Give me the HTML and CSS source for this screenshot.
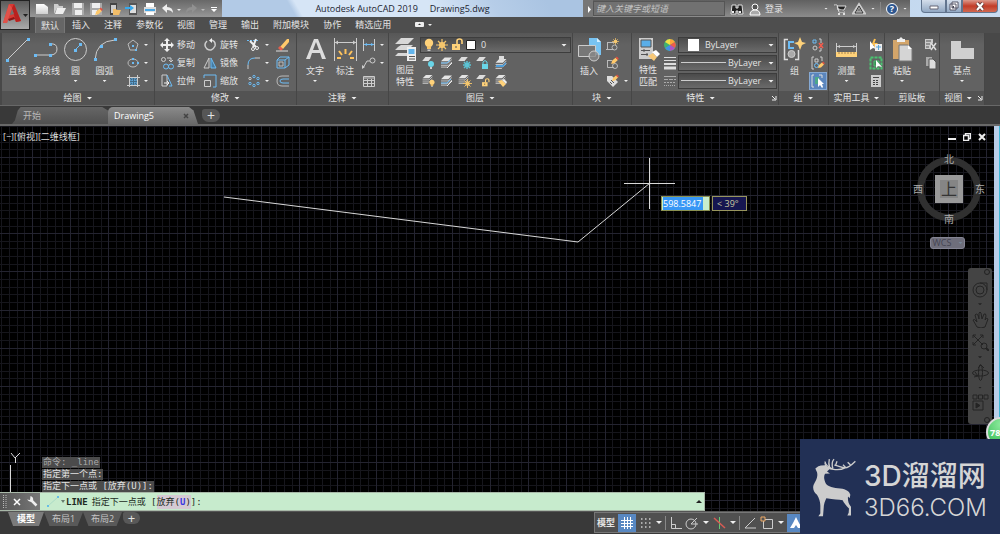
FILE: index.html
```html
<!DOCTYPE html>
<html lang="zh-CN">
<head>
<meta charset="utf-8">
<title>Autodesk AutoCAD 2019 - Drawing5.dwg</title>
<link rel="stylesheet" href="styles.css">
</head>
<body>
<svg class="defs" aria-hidden="true">
  <defs>
    <linearGradient id="paper" x1="0" y1="0" x2="0" y2="1"><stop offset="0" stop-color="#fff"/><stop offset="1" stop-color="#cfcfcf"/></linearGradient>
    <symbol id="sheet" viewBox="0 0 12 5"><path d="M4 0H12L8 5H0Z" fill="#ddd"/></symbol>
    <symbol id="stack" viewBox="0 0 12 11"><path d="M4 0H12L8 4H0Z" fill="#e4e4e4"/><path d="M0 6H8L12 2M0 8.500H8L12 5M0 10.500H7" fill="none" stroke="#d0d0d0"/></symbol>
    <symbol id="bulb" viewBox="0 0 10 14"><circle cx="5" cy="5" r="4.200" fill="#ffd27a"/><path d="M3 8H7V11H3Z" fill="#f5c56b"/><path d="M3.500 11.500H6.500V13H3.500Z" fill="#c9c9c9"/></symbol>
    <symbol id="sun" viewBox="0 0 12 12"><circle cx="6" cy="6" r="3" fill="#ffd27a"/><path d="M6 0V12M0 6H12M2 2L10 10M10 2L2 10" stroke="#f5c56b" stroke-width="1.200"/></symbol>
    <symbol id="unlock" viewBox="0 0 12 13"><path d="M1 6H9V12H1Z" fill="#ffd27a"/><path d="M6 6V3Q6 1 8.500 1T11 3V6" fill="none" stroke="#ffd27a" stroke-width="1.600"/><path d="M4.500 8H5.500V10H4.500Z" fill="#555"/></symbol>
    <symbol id="pencil" viewBox="0 0 8 8"><path d="M1 7L2 4L5 1.500L7 3.500L4 6.500Z" fill="#ffc96b"/><path d="M5 1.500L6 .500L7.800 2.300L7 3.500Z" fill="#e34f3f"/></symbol>
  </defs>
</svg>

<header class="top">
  <button class="app-button" aria-label="应用程序菜单">
    <svg width="30" height="28" viewBox="0 0 30 28"><path d="M3 22L9 3H14L21 20L16 21L14 17L8 18L7 22Z" fill="#d83a34"/><path d="M9 3L3 22L7 22L12 7Z" fill="#e0524a"/><path d="M14 3L21 20L16 21L12 7Z" fill="#b8211f"/><path d="M10 14L12 8L14 13Z" fill="#727272"/><path d="M8 18L14 16L15 18L9 20Z" fill="#8e1515"/><path d="M23 13H28L25.500 16Z" fill="#222"/></svg>
  </button>
  <div class="titlebar">
    <div class="quick">
      <button aria-label="新建"><svg width="14" height="14"><path d="M1 2H9L13 5V12H1Z" fill="url(#paper)"/></svg></button>
      <button aria-label="打开"><svg width="14" height="14"><path d="M1 2H5L6 4H10V6H4L1 12Z" fill="#ccc"/><path d="M4 6H13L10 12H2Z" fill="#eee"/></svg></button>
      <button aria-label="保存"><svg width="14" height="14"><path d="M1 1H13V13H1Z" fill="#aaa"/><path d="M3 1H11V6H3ZM4 8H11V13H4Z" fill="#eee"/></svg></button>
      <button aria-label="另存为"><svg width="14" height="14"><path d="M1 1H13V13H1Z" fill="#aaa"/><path d="M3 1H11V6H3ZM3 8H8V13H3Z" fill="#eee"/><use href="#pencil" x="5" y="5" width="9" height="9"/></svg></button>
      <button aria-label="从移动设备打开"><svg width="14" height="14"><path d="M3 1H10V13H3Z" fill="#444"/><path d="M4 3H9V11H4Z" fill="#ccc"/><path d="M6 7H9L10 8H14L12 13H6Z" fill="#f1bd69"/></svg></button>
      <button aria-label="保存到移动设备"><svg width="14" height="14"><path d="M4 1H12V13H4Z" fill="#555"/><path d="M5 3H11V11H5Z" fill="#ddd"/><path d="M0 5H5V3L9 6L5 9V7H0Z" fill="#36a9ed"/></svg></button>
      <button aria-label="打印"><svg width="14" height="14"><path d="M3 1H11V5H3Z" fill="#fff"/><path d="M1 5H13V11H1Z" fill="#ddd"/><path d="M2 7H12V9H2Z" fill="#48a6e3"/><path d="M3 10H11V13H3Z" fill="#fff"/></svg></button>
      <button aria-label="放弃"><svg width="20" height="14"><path d="M1 6L6 2V5Q12 5 12 11Q10 8 6 8V11Z" fill="#eee"/><path d="M16 7H20L18 9Z" fill="#eee"/></svg></button>
      <button aria-label="重做"><svg width="20" height="14"><path d="M12 6L7 2V5Q1 5 1 11Q3 8 7 8V11Z" fill="#919191"/><path d="M16 7H20L18 9Z" fill="#bbb"/></svg></button>
      <button aria-label="自定义"><svg width="10" height="14"><path d="M2 5H8V6H2ZM2 7H8L5 10Z" fill="#fff"/></svg></button>
    </div>
    <div class="caption"><span>Autodesk AutoCAD 2019</span><span>Drawing5.dwg</span></div>
    <div class="info">
      <button class="info-arrow" aria-label="展开"><svg width="9" height="16"><path d="M4 5L7 8.500L4 12Z" fill="#fff"/></svg></button>
      <input class="search" type="search" aria-label="搜索" placeholder="键入关键字或短语">
      <button aria-label="查找"><svg width="14" height="14"><path d="M2 3H6V6H8V3H12L13 12H8V9H6V12H1Z" fill="#222" stroke="#ddd"/><path d="M3 9V11M10 9V11" stroke="#eee" stroke-width="2"/></svg></button>
      <button class="login"><svg width="12" height="14"><circle cx="6" cy="5" r="3" fill="#555" stroke="#fff"/><path d="M1 13Q1 8 6 8T11 13Z" fill="#aaa" stroke="#fff"/></svg>登录</button>
      <i class="caret small push"></i>
      <button aria-label="应用商店"><svg width="14" height="14"><path d="M1 3H4L6 10H12M4 4H13L11 8H5Z" fill="#222" stroke="#ddd"/><circle cx="6" cy="12" r="1" fill="#fff"/><circle cx="11" cy="12" r="1" fill="#fff"/></svg></button>
      <button aria-label="保持连接"><svg width="14" height="14"><path d="M7 3L2 11H12Z" fill="none" stroke="#ccc" stroke-width="3"/><path d="M7 4L3 11H11Z" fill="none" stroke="#333"/></svg></button>
      <i class="caret small"></i><i class="bar"></i>
      <button aria-label="帮助" class="help">?</button>
      <i class="caret small"></i>
    </div>
    <div class="window-controls">
      <button aria-label="最小化"><svg width="12" height="8"><path d="M2 4H10V7H2Z" fill="#fff" stroke="#667"/></svg></button>
      <button aria-label="还原"><svg width="10" height="10"><path d="M3 1H9V7H3ZM1 3H7V9H1Z" fill="#fff" stroke="#556"/><path d="M3.500 5H5V7H3.500Z" fill="#445"/></svg></button>
      <button class="close" aria-label="关闭"><svg width="10" height="9"><path d="M2 1L8 8M8 1L2 8" stroke="#6e403d" stroke-width="4"/><path d="M2 1L8 8M8 1L2 8" stroke="#fff" stroke-width="2"/></svg></button>
    </div>
  </div>
  <nav class="menu">
    <a class="active" href="#">默认</a><a href="#">插入</a><a href="#">注释</a><a href="#">参数化</a><a href="#">视图</a><a href="#">管理</a><a href="#">输出</a><a href="#">附加模块</a><a href="#">协作</a><a href="#">精选应用</a>
    <button class="menu-toggle" aria-label="最小化功能区"><svg width="18" height="8"><rect x="0" y="1" width="9" height="5" rx="1" fill="#eee"/><path d="M3 4L4.500 2.500L6 4Z" fill="#333"/><path d="M13 3H17L15 5Z" fill="#eee"/></svg></button>
  </nav>
</header>

<main class="ribbon">
  <section class="panel draw">
    <div class="tools">
      <button class="big"><svg width="25" height="25" fill="none"><path d="M2 23L23 2" stroke="#ccc"/><path d="M1 22h3v3H1zM22 1h3v3h-3z" fill="#6cbcf5"/></svg>直线</button>
      <button class="big"><svg width="25" height="25" fill="none"><path d="M1 18H16Q23 18 23 12T16 7" stroke="#ccc"/><path d="M0 17h3v3H0zM15 17h3v3h-3zM15 6h3v3h-3z" fill="#6cbcf5"/></svg>多段线</button>
      <button class="big"><svg width="25" height="25" fill="none"><circle cx="12.500" cy="12.500" r="11" stroke="#ccc"/><path d="M12 13L18 7" stroke="#6cbcf5"/><path d="M11 12h3v3h-3zM16 6h3v3h-3z" fill="#6cbcf5"/></svg>圆<i class="caret small"></i></button>
      <button class="big"><svg width="25" height="25" fill="none"><path d="M3 23Q4 4 23 3" stroke="#ccc"/><path d="M2 21h3v3H2zM8 8h3v3H8zM22 1h3v3h-3z" fill="#6cbcf5"/></svg>圆弧<i class="caret small"></i></button>
      <div class="stack">
        <button aria-label="多边形"><svg width="14" height="14" fill="none"><path d="M7 2L12 6L10 12H4L2 6Z" stroke="#bbb"/><path d="M6 7h2v2H6zM9 11h2v2H9z" fill="#6cbcf5"/></svg><i class="caret small"></i></button>
        <button aria-label="椭圆"><svg width="14" height="14" fill="none"><ellipse cx="7" cy="7" rx="5" ry="4" stroke="#bbb"/><path d="M6 6h2v2H6zM11 6h2v2h-2zM6 2h2v2H6z" fill="#6cbcf5"/></svg><i class="caret small"></i></button>
        <button aria-label="图案填充"><svg width="14" height="14" fill="none"><path d="M4 4H11V11H4Z" fill="#426985"/><path d="M4 6H11M4 9H11M6 4V11M9 4V11" stroke="#6cbcf5" stroke-dasharray="1 1"/><path d="M3.500 1V13M11.500 1V13M1 3.500H14M1 11.500H14" stroke="#ccc"/></svg><i class="caret small"></i></button>
      </div>
    </div>
    <button class="panel-title">绘图<i class="caret"></i></button>
  </section>

  <section class="panel modify">
    <div class="tools">
      <div class="stack">
        <button><svg width="14" height="14"><path d="M6 3H4L7 0L10 3H8V6H11V4L14 7L11 10V8H8V11H10L7 14L4 11H6V8H3V10L0 7L3 4V6H6Z" fill="#eee"/></svg>移动</button>
        <button><svg width="14" height="14" fill="none"><circle cx="3.500" cy="3.500" r="2" stroke="#ccc"/><path d="M7 2H11V5M9 4L11 6L13 4" stroke="#ccc"/><circle cx="6" cy="10.500" r="2.500" stroke="#6cbcf5"/><circle cx="11" cy="10.500" r="2.500" stroke="#6cbcf5"/></svg>复制</button>
        <button><svg width="14" height="14" fill="none"><path d="M2 1H7V12H2Z" stroke="#ccc"/><path d="M7 1L12 12H9" stroke="#6cbcf5"/><path d="M4 9H9M7 7L9 9L7 11" stroke="#eee"/></svg>拉伸</button>
      </div>
      <div class="stack">
        <button><svg width="14" height="14" fill="none"><path d="M4 3Q0 7 4 11Q9 14 12 8Q13 3 8 2" stroke="#ccc" stroke-width="1.500"/><path d="M9 0L6 2.500L9 5Z" fill="#eee"/></svg>旋转</button>
        <button><svg width="14" height="14" fill="none"><path d="M6 2V12H1Z" stroke="#ccc"/><path d="M8 2V12H13Z" fill="#477ba0" stroke="#6cbcf5"/></svg>镜像</button>
        <button><svg width="14" height="14" fill="none"><path d="M1 4V1H13V13H10" stroke="#6cbcf5"/><path d="M1.500 6.500H7.500V12.500H1.500Z" stroke="#ccc"/></svg>缩放</button>
      </div>
      <div class="stack">
        <button aria-label="修剪"><svg width="14" height="14" fill="none"><path d="M0 2.500H11" stroke="#6cbcf5" stroke-dasharray="2 1"/><path d="M9 1L6 9M3 3L9 9" stroke="#eee" stroke-width="2"/><circle cx="10" cy="10" r="1.500" stroke="#eee"/><circle cx="6" cy="11" r="1.500" stroke="#eee"/></svg><i class="caret small"></i></button>
        <button aria-label="圆角"><svg width="14" height="14" fill="none"><path d="M1 13V9" stroke="#ccc"/><path d="M1 9Q1 2 8 2" stroke="#6cbcf5"/><path d="M8 2H13" stroke="#ccc"/></svg><i class="caret small"></i></button>
        <button aria-label="阵列"><svg width="14" height="14" fill="none" stroke="#6cbcf5"><circle cx="7" cy="2.500" r="1.200"/><circle cx="11" cy="4.500" r="1.200"/><circle cx="11" cy="9.500" r="1.200"/><circle cx="7" cy="11.500" r="1.200"/><circle cx="3" cy="9.500" r="1.200"/><circle cx="3" cy="4.500" r="1.200" stroke="#ccc"/></svg><i class="caret small"></i></button>
      </div>
      <div class="stack">
        <button aria-label="删除"><svg width="14" height="14"><path d="M4 9L11 1L13 1V4L7 11Z" fill="#ffc96b"/><path d="M2 10L4 8L7 11L5 13Z" fill="#e35f4d"/><path d="M0 13H12" stroke="#ddd"/></svg></button>
        <button aria-label="分解"><svg width="14" height="14" fill="none"><path d="M1 4H9V12H1ZM4 1H13V9L9 12M1 4L4 1M9 4L13 1" stroke="#6cbcf5"/><path d="M3 6H7V10H3Z" stroke="#bbb"/></svg></button>
        <button aria-label="偏移"><svg width="14" height="14" fill="none"><path d="M13 2H6Q1 2 1 7T6 12H13" stroke="#bbb"/><path d="M13 5H7Q4 5 4 7T7 9H13" stroke="#6cbcf5"/></svg></button>
      </div>
    </div>
    <button class="panel-title">修改<i class="caret"></i></button>
  </section>

  <section class="panel annotate">
    <div class="tools">
      <button class="big"><svg width="25" height="25"><path d="M3 22L11 2H15L23 22H19L17 16H9L7 22ZM10 13H16L13 5Z" fill="#ddd"/></svg>文字<i class="caret small"></i></button>
      <button class="big"><svg width="25" height="25" fill="none"><path d="M1.500 1V24M23.500 1V24M2 5.500H23" stroke="#ccc"/><path d="M2 5.500L5 3.500V7.500ZM23 5.500L20 3.500V7.500Z" fill="#ccc"/><path d="M12.500 17V12M9 18L6 14M16 18L19 14M8 21H4M17 21H21" stroke="#ffc35c" stroke-width="2"/></svg>标注</button>
      <div class="stack">
        <button aria-label="线性"><svg width="14" height="14" fill="none"><path d="M1.500 1V13M12.500 1V13" stroke="#ccc"/><path d="M2 6.500H12" stroke="#6cbcf5"/><path d="M2 6.500L5 5V8ZM12 6.500L9 5V8Z" fill="#6cbcf5"/></svg><i class="caret small"></i></button>
        <button aria-label="引线"><svg width="14" height="14" fill="none"><path d="M1 12L5 5H8" stroke="#ccc"/><circle cx="10.500" cy="4.500" r="2.500" stroke="#ccc"/><path d="M0 13V9L3 11Z" fill="#ccc"/></svg><i class="caret small"></i></button>
        <button aria-label="表格"><svg width="14" height="14" fill="none"><path d="M1.500 2.500H12.500V12.500H1.500ZM2 6.500H12M2 9.500H12M5.500 5V12M9.500 5V12M2 4H12" stroke="#ccc"/></svg></button>
      </div>
    </div>
    <button class="panel-title">注释<i class="caret"></i></button>
  </section>

  <section class="panel layers">
    <div class="tools">
      <button class="big wrap"><svg width="25" height="25"><path d="M8 1H21L15 7H2ZM8 8H20L15 13H2L5 10ZM5 16H14V19H2Z" fill="#d8d8d8"/><path d="M14 10H23V24H14Z" fill="#eee"/><path d="M15.500 12H21.500V17H15.500Z" fill="#62b5ed"/><path d="M16 19.500H22M16 22H22" stroke="#555"/></svg>图层特性</button>
      <div class="layer-side">
        <div class="combo">
          <svg width="56" height="14"><use href="#bulb" x="3" width="10" height="14"/><use href="#sun" x="15" y="1" width="12" height="12"/><use href="#unlock" x="30" width="12" height="13"/><path d="M45.500 2.500H54.500V11.500H45.500Z" fill="#fff" stroke="#222"/></svg>
          <select aria-label="图层"><option>0</option></select><i class="caret"></i>
        </div>
        <div class="icon-row">
          <button aria-label="关闭图层"><svg width="14" height="14"><use href="#sheet" x="0" y="1" width="10" height="4"/><circle cx="9" cy="8" r="3" fill="#69d5e8"/><path d="M8 11H10V13H8Z" fill="#ccc"/></svg></button>
          <button aria-label="隔离"><svg width="14" height="14"><use href="#stack" x="1" y="1" width="11" height="11"/><path d="M7 12L12 7" stroke="#eee"/><path d="M1 7H7L10 4" stroke="#6cbcf5" fill="none"/></svg></button>
          <button aria-label="冻结"><svg width="14" height="14"><use href="#sheet" x="0" y="1" width="10" height="4"/><path d="M9 5V13M5 9H13M6 6L12 12M12 6L6 12" stroke="#5cc3d4" stroke-width="1.500"/></svg></button>
          <button aria-label="锁定"><svg width="14" height="14"><use href="#sheet" x="0" y="1" width="10" height="4"/><path d="M6 8H12V13H6Z" fill="#69d5e8"/><path d="M7 8V6Q9 3 11 6V8" fill="none" stroke="#69d5e8"/></svg></button>
          <button aria-label="置为当前"><svg width="14" height="14"><use href="#stack" x="1" y="3" width="12" height="10"/><path d="M2 9H9L12 6V8L9 11H2Z" fill="#4d9edb"/><path d="M5 0H10V5H5Z" fill="#ddd"/></svg></button>
        </div>
        <div class="icon-row">
          <button aria-label="打开所有图层"><svg width="14" height="14"><use href="#stack" x="0" y="1" width="11" height="9"/><use href="#bulb" x="7" y="5" width="6" height="9"/></svg></button>
          <button aria-label="取消隔离"><svg width="14" height="14"><use href="#stack" x="1" y="1" width="11" height="11"/><path d="M7 12L12 7" stroke="#eee"/><path d="M1 9H7L11 5" stroke="#6cbcf5" fill="none"/></svg></button>
          <button aria-label="解冻"><svg width="14" height="14"><use href="#stack" x="0" y="1" width="11" height="9"/><use href="#sun" x="5" y="5" width="9" height="9"/></svg></button>
          <button aria-label="解锁"><svg width="14" height="14"><use href="#sheet" x="0" y="1" width="10" height="4"/><use href="#unlock" x="5" y="4" width="9" height="9"/></svg></button>
          <button aria-label="匹配图层"><svg width="14" height="14"><use href="#stack" x="1" y="1" width="11" height="9"/><path d="M4 7L8 6L12 10L9 13Z" fill="#ffd27a"/><path d="M8 6L10 5L13 8L12 10Z" fill="#eee"/></svg></button>
        </div>
      </div>
    </div>
    <button class="panel-title">图层<i class="caret"></i></button>
  </section>

  <section class="panel block">
    <div class="tools">
      <button class="big"><svg width="25" height="25"><path d="M12 1H20L24 5V18H12Z" fill="#78c3f2"/><path d="M20 1V5H24Z" fill="#d5efff"/><path d="M1.500 8.500H18.500V19.500H1.500Z" fill="#777" stroke="#ccc"/><circle cx="17" cy="19" r="5" fill="#888" fill-opacity=".8" stroke="#ccc"/></svg>插入</button>
      <div class="stack">
        <button aria-label="创建块"><svg width="14" height="14"><path d="M1.500 4.500H8M1.500 4V11.500H8M0 11.500H3" fill="none" stroke="#bbb"/><circle cx="8.500" cy="9.500" r="2.500" fill="none" stroke="#bbb"/><use href="#sun" x="6" y="0" width="7" height="7"/></svg></button>
        <button aria-label="编辑块"><svg width="14" height="14"><path d="M1.500 4.500H6M1.500 4V11.500H8" fill="none" stroke="#bbb"/><circle cx="9" cy="10" r="2.500" fill="none" stroke="#bbb"/><use href="#pencil" x="4" y="0" width="9" height="9"/></svg></button>
        <button aria-label="编辑属性"><svg width="14" height="14"><path d="M1 2H6L12 8L7 13L1 7Z" fill="#ddd"/><path d="M5 6L8 9M4 8L6 10" stroke="#555"/><use href="#pencil" x="5" y="0" width="8" height="8"/></svg><i class="caret small"></i></button>
      </div>
    </div>
    <button class="panel-title">块<i class="caret"></i></button>
  </section>

  <section class="panel props">
    <div class="tools">
      <button class="big wrap"><svg width="25" height="25"><path d="M3 1H17V22H3Z" fill="#ccc"/><path d="M5 3H15V10H5Z" fill="#5aaee8" stroke="#555"/><path d="M5 13.500H14M5 17.500H12M8 12V15M11 16V19" stroke="#555"/><path d="M12 19L17 16L21 20L18 24Z" fill="#f7c877"/><path d="M16 15L20 13L24 17L21 20Z" fill="#fff"/></svg>特性匹配</button>
      <div class="stack marks">
        <span><svg width="14" height="14"><circle cx="7" cy="7" r="6" fill="#40b26f"/><path d="M7 7V1A6 6 0 0 1 12 4Z" fill="#ffa43b"/><path d="M7 7L12 4A6 6 0 0 1 12 10Z" fill="#f15b4c"/><path d="M7 7L12 10A6 6 0 0 1 7 13Z" fill="#ad54c8"/><path d="M7 7V13A6 6 0 0 1 2 10Z" fill="#458fe6"/><path d="M7 7L2 4A6 6 0 0 1 7 1Z" fill="#f2df45"/></svg></span>
        <span><svg width="14" height="14"><path d="M1 1.500H13M1 4.500H13" stroke="#ddd"/><path d="M1 8H13" stroke="#ddd" stroke-width="2"/><path d="M1 12H13" stroke="#ddd" stroke-width="3"/></svg></span>
        <span><svg width="14" height="14"><path d="M1 2.500H13" stroke="#aaa"/><path d="M1 5.500H13" stroke="#aaa" stroke-dasharray="4 1"/><path d="M1 8.500H13" stroke="#aaa" stroke-dasharray="2 1"/><path d="M1 11.500H13" stroke="#aaa" stroke-dasharray="1 1"/></svg></span>
      </div>
      <div class="prop-combos">
        <div class="combo"><svg width="24" height="14"><path d="M9 1H20V13H9Z" fill="#fff"/></svg><select aria-label="颜色"><option>ByLayer</option></select><i class="caret"></i></div>
        <div class="combo"><svg width="47" height="14"><path d="M2 6.500H47" stroke="#ccc"/></svg><select aria-label="线宽"><option>ByLayer</option></select><i class="caret"></i></div>
        <div class="combo"><svg width="47" height="14"><path d="M2 6.500H47" stroke="#ccc"/></svg><select aria-label="线型"><option>ByLayer</option></select><i class="caret"></i></div>
      </div>
    </div>
    <div class="title-row"><button class="panel-title">特性<i class="caret"></i></button><button class="launcher" aria-label="特性面板"><svg width="6" height="6"><path d="M1 1L4 4M5 1V5H1" fill="none" stroke="#eee"/></svg></button></div>
  </section>

  <section class="panel group">
    <div class="tools">
      <button class="big"><svg width="25" height="25" fill="none"><path d="M6 2.500H2.500V22.500H6M13 22.500H16.500V13" stroke="#ddd" stroke-width="1.500"/><path d="M12 5H7V11H12" stroke="#6cbcf5" stroke-width="2"/><circle cx="9.500" cy="17" r="3.500" fill="#aaa" stroke="#ccc"/><path d="M18 0L20 5L24 6L20 8L18 13L16 8L12 6L16 5Z" fill="#ffd27a"/></svg>组</button>
      <div class="stack">
        <button aria-label="解除编组"><svg width="14" height="14" fill="none"><path d="M2 2H5V5H2Z" stroke="#6cbcf5"/><circle cx="4" cy="10" r="2" stroke="#ccc"/><path d="M8 1H10V5M10 10V13H8" stroke="#ccc"/><path d="M8 5L12 10M12 5L8 10" stroke="#f45c4d" stroke-width="1.500"/></svg></button>
        <button aria-label="组编辑"><svg width="14" height="14" fill="none"><path d="M3 1H1V13H3M9 1H11V5M4 3H7V6H4Z" stroke="#ccc"/><circle cx="5.500" cy="9.500" r="2" stroke="#6cbcf5"/><use href="#pencil" x="6" y="5" width="8" height="8"/></svg></button>
        <button class="selected" aria-label="启用组选择"><svg width="14" height="14" fill="none"><path d="M3 1H1V13H3M8 1H11V4" stroke="#ddd"/><path d="M4 3H8V10H4Z" fill="#4ca88a"/><path d="M7 4V13L9 11L11 14L12 13L11 10H13Z" fill="#fff"/></svg></button>
      </div>
    </div>
    <button class="panel-title">组<i class="caret"></i></button>
  </section>

  <section class="panel utils">
    <div class="tools">
      <button class="big"><svg width="25" height="25" fill="none"><path d="M2.500 6V15M22.500 6V15M3 9.500H22" stroke="#ccc"/><path d="M3 9.500L6 8V11ZM22 9.500L19 8V11Z" fill="#ccc"/><path d="M2 15H23V20H2Z" fill="#ffd27a"/><path d="M5 15V17M8 15V17M11 15V17M14 15V17M17 15V17M20 15V17" stroke="#a88550"/></svg>测量<i class="caret small"></i></button>
      <div class="stack">
        <button aria-label="快速选择"><svg width="14" height="14"><path d="M6 1L4 6H7L5 9" stroke="#ffc14f" stroke-width="2" fill="none"/><path d="M1 3V12L4 10L7 11Z" fill="#fff"/><path d="M6 6H13V13H6Z" fill="#eee"/><path d="M7 9H12M9.500 7V12" stroke="#58a5da"/></svg></button>
        <button aria-label="全部选择"><svg width="14" height="14" fill="none"><path d="M1.500 1.500H12.500V12.500H1.500Z" stroke="#4ac370" stroke-width="2" stroke-dasharray="3 1"/><path d="M5 5H10V10H5Z" stroke="#4ac370" fill="#3b8b55"/><path d="M7 4V12L9 10L13 11Z" fill="#fff"/></svg></button>
        <button aria-label="快速计算器"><svg width="14" height="14"><path d="M2 1H12V13H2Z" fill="#ccc"/><path d="M4 3.500H10" stroke="#444"/><path d="M4 6.500H10M4 8.500H10M4 10.500H10" stroke="#444" stroke-dasharray="2 1"/></svg></button>
      </div>
    </div>
    <button class="panel-title">实用工具<i class="caret"></i></button>
  </section>

  <section class="panel clip">
    <div class="tools">
      <button class="big"><svg width="25" height="25"><path d="M3 3H19V22H3Z" fill="#d3a56a"/><path d="M7 2H9L11 0L13 2H15V5H7Z" fill="#eee"/><path d="M9 8H18L22 12V24H9Z" fill="#d5d5d5" stroke="#777"/><path d="M18 8V12H22Z" fill="#fff"/></svg>粘贴<i class="caret small"></i></button>
      <div class="stack">
        <button aria-label="剪切"><svg width="14" height="14"><path d="M1 1H9V5L7 7V11H1Z" fill="#ccc"/><path d="M2 3H7M2 6H6M2 9H5" stroke="#555"/><path d="M7 5L12 12M12 5L7 12" stroke="#ddd" stroke-width="1.500"/></svg></button>
        <button aria-label="复制剪裁"><svg width="14" height="14"><path d="M2 1H8V10H2Z" fill="#aaa"/><path d="M5 3H9L12 6V13H5Z" fill="#ddd" stroke="#555"/></svg></button>
      </div>
    </div>
    <div class="panel-title">剪贴板</div>
  </section>

  <section class="panel view">
    <div class="tools">
      <button class="big"><svg width="25" height="25"><path d="M1 4H11V11H24V22H1Z" fill="#d0d0d0"/></svg>基点<i class="caret small"></i></button>
    </div>
    <div class="title-row"><button class="panel-title">视图<i class="caret"></i></button><button class="launcher" aria-label="视图面板"><svg width="6" height="6"><path d="M1 1L4 4M5 1V5H1" fill="none" stroke="#eee"/></svg></button></div>
  </section>
</main>

<nav class="doc-tabs">
  <a class="doc start" href="#">开始</a>
  <a class="doc current" href="#">Drawing5<svg width="6" height="6"><path d="M1 1L5 5M5 1L1 5" stroke="#444" stroke-width="1.500"/></svg></a>
  <button class="doc-add" aria-label="新图形">+</button>
</nav>

<section class="canvas">
  <svg class="drawing" width="100%" height="100%">
    <path id="minor" class="grid-minor"/>
    <path id="major" class="grid-major"/>
    <path class="entity" d="M224 71L578 116L650 57"/>
    <path class="cursor" d="M624 57.500H675M649.500 32V83"/>
    <path class="cursor" d="M10.500 339V386M11 327L15 332L20 327M15.500 332V337"/>
  </svg>
  <div class="viewport-label">[−][俯视][二维线框]</div>
  <div class="dynamic"><label><input value="598.5847" aria-label="长度"></label><output>&lt; 39°</output></div>

  <div class="viewport-controls">
    <button aria-label="最小化视口"><svg width="8" height="8"><path d="M0 5H8V7H0Z" fill="#eee"/></svg></button>
    <button aria-label="还原视口"><svg width="8" height="8" fill="none"><path d="M2.500 2V.500H7.500V5.500H6M.500 2.500H5.500V7.500H.500Z" stroke="#eee" stroke-width="1.500"/></svg></button>
    <button aria-label="关闭视口"><svg width="8" height="8"><path d="M1 1L7 7M7 1L1 7" stroke="#eee" stroke-width="2"/></svg></button>
  </div>
  <div class="cube">
    <span class="n">北</span><span class="w">西</span><button class="ring-top">上</button><span class="e">东</span><span class="s">南</span>
  </div>
  <button class="wcs">WCS<i class="caret small"></i></button>
  <div class="navbar">
    <button class="corner" aria-label="关闭导航栏"><svg width="6" height="6" fill="none"><circle cx="3" cy="3" r="2.500" stroke="#222"/></svg></button>
    <button aria-label="全导航控制盘"><svg width="17" height="17" fill="none" stroke="#242424"><circle cx="8" cy="9" r="7"/><circle cx="8" cy="9" r="4"/><path d="M8 2H15V9"/></svg></button>
    <i class="caret small"></i>
    <button aria-label="平移"><svg width="17" height="17" fill="none" stroke="#242424"><path d="M5 16L1 9Q2 7 5 11L3 4Q4 2 6 4L7 8L7 2Q8 0 9 2L10 8L12 3Q14 2 14 5L13 9Q15 6 16 8L13 16Q9 18 5 16Z"/></svg></button>
    <button aria-label="范围缩放"><svg width="17" height="17" fill="none" stroke="#242424"><path d="M1 1L11 11M11 1L1 11M1 4V1H4M8 1H11V4M1 8V11H4"/><circle cx="12" cy="12" r="3"/><path d="M14 14L17 17" stroke-width="2"/></svg></button>
    <i class="caret small"></i>
    <button aria-label="动态观察"><svg width="17" height="17" fill="none" stroke="#242424"><ellipse cx="8.500" cy="9" rx="8" ry="3"/><ellipse cx="8.500" cy="8.500" rx="2" ry="8"/><path d="M3 8L6 12L2 13M6 4L9 1L12 4"/></svg></button>
    <i class="caret small"></i>
    <button aria-label="ShowMotion"><svg width="17" height="17" fill="none" stroke="#242424"><path d="M1 1H5V5H1ZM6.500 1H10.500V5H6.500ZM12 1H16V5H12ZM1 7H11V16H1Z"/><path d="M4 9L8 11.500L4 14Z" fill="#242424"/></svg></button>
    <button class="corner" aria-label="导航栏选项"><svg width="6" height="6" fill="none"><circle cx="3" cy="3" r="2.500" stroke="#222"/></svg></button>
  </div>

  <div class="history"><p class="old">命令: _line</p><p>指定第一个点:</p><p>指定下一点或 [放弃(U)]:</p></div>
  <div class="command">
    <div class="command-tools">
      <svg width="5" height="13"><path d="M1.500 0V13M4 0V13" stroke="#bbb" stroke-dasharray="1 1"/></svg>
      <button aria-label="关闭命令行"><svg width="8" height="8"><path d="M1 1L7 7M7 1L1 7" stroke="#fff" stroke-width="1.500"/></svg></button>
      <button aria-label="自定义命令行"><svg width="11" height="11"><path d="M4 4L9.500 9.500" stroke="#eee" stroke-width="2.500"/><path d="M3.500 0Q7 1 6 5Q3 7 0 3.500L3 4Z" fill="#eee"/></svg></button>
    </div>
    <svg width="22" height="14"><path d="M4 11L14 2" stroke="#abdcc6"/><path d="M3 10h2v2H3zM13 1h2v2h-2z" fill="#65bde7"/><path d="M17 5H21L19 8Z" fill="#687c6d"/></svg>
    <b>LINE</b><span class="prompt">指定下一点或 [<button>放弃(<em>U</em>)</button>]:</span>
    <button class="command-up" aria-label="展开历史"><svg width="6" height="6"><path d="M0 4H6L3 1Z" fill="#222"/></svg></button>
  </div>
  <div class="window-edge"></div>
  <div class="ball">78</div>
</section>

<footer class="status">
  <nav class="layouts"><a class="on" href="#">模型</a><a href="#">布局1</a><a href="#">布局2</a><button aria-label="新建布局">+</button></nav>
  <div class="toggles">
    <button class="model">模型</button>
    <button class="lit" aria-label="栅格"><svg width="14" height="14"><path d="M4.500 1V13M7.500 1V13M10.500 1V13M1 4.500H13M1 7.500H13M1 10.500H13" stroke="#fff"/></svg></button>
    <button aria-label="捕捉"><svg width="13" height="14"><path d="M2 3H12M2 7H12M2 11H12" stroke="#ccc" stroke-width="1.500" stroke-dasharray="1.500 2.500"/></svg><i class="caret"></i></button>
    <i class="bar"></i>
    <button aria-label="正交"><svg width="13" height="14" fill="none"><path d="M2.500 1V12.500H13M3 8.500H6.500V12" stroke="#ccc"/></svg></button>
    <button aria-label="极轴"><svg width="14" height="14" fill="none"><circle cx="6" cy="8" r="5" stroke="#ccc"/><path d="M6 8H13M6 8L12 2" stroke="#ccc"/></svg><i class="caret"></i></button>
    <button aria-label="等轴测"><svg width="14" height="14" fill="none"><path d="M7.500 1V13" stroke="#65ca75"/><path d="M2 2L13 12" stroke="#d85b54" stroke-width="1.500"/></svg><i class="caret"></i></button>
    <i class="bar"></i>
    <button aria-label="对象捕捉追踪"><svg width="14" height="14" fill="none"><path d="M12 2L2 12H13" stroke="#ccc"/></svg></button>
    <button aria-label="对象捕捉"><svg width="14" height="14" fill="none"><path d="M3.500 3.500H12.500V12.500H3.500Z" stroke="#ccc"/><path d="M1 1H5V5H1Z" fill="#555" stroke="#eda865"/></svg><i class="caret"></i></button>
    <button class="lit" aria-label="注释可见性"><svg width="14" height="14"><path d="M7 1L10 7L13 12H9L7 9L5 12H1L4 7Z" fill="#fff"/></svg></button>
  </div>
</footer>

<aside class="brand">
  <svg width="45" height="59" viewBox="65 142 135 176"><path d="M75 173L84 166L92 164L104 163L101 154L112 168L122 171L110 182L119 188L104 189C99 198 102 208 106 217C112 228 130 231 150 233C168 235 178 242 180 252L178 262L173 257C172 268 174 278 182 288L182 314H171L175 306L176 293C168 285 160 275 157 268C145 266 130 266 108 262C104 270 100 280 100 292L98 316H84L90 308V285C90 272 86 262 80 252C70 245 66 232 70 222C76 208 84 200 80 184Z" fill="#ccc"/><path d="M110 170C120 176 148 180 164 171C177 171 186 160 195 151M126 174C112 168 105 160 104 152M118 170C114 160 115 153 117 145M128 173C123 160 125 152 131 145M136 163L140 151M164 171C153 170 145 165 132 163M166 170L158 162M180 162L172 154" fill="none" stroke="#ccc" stroke-width="4"/></svg>
  <div><strong>3D溜溜网</strong><span>3D66.COM</span></div>
</aside>
<script src="grid.js"></script>
</body>
</html>
```

FILE: styles.css
```css
*, *::before { box-sizing: border-box; }
body {
  margin: 0;
  height: 100vh;
  display: flex;
  flex-direction: column;
  overflow: hidden;
  position: relative;
  background: #393939;
  color: #e4e4e4;
  font: 9px/12px "Open Sans", "Noto Sans CJK SC", sans-serif;
}
.defs { position: absolute; width: 0; height: 0; }
svg { display: block; flex: none; }
a { color: inherit; text-decoration: none; }
p { margin: 0; }
button, input, select {
  font: inherit;
  color: inherit;
  background: none;
  border: 0;
  padding: 0;
  margin: 0;
}
button { display: flex; align-items: center; justify-content: center; white-space: nowrap; }
.caret {
  flex: none;
  width: 6px;
  height: 3px;
  background: #eee;
  clip-path: polygon(0 0, 100% 0, 50% 100%);
}
.caret.small { width: 4px; height: 2px; }
.bar { width: 1px; height: 14px; background: #888; }

/* title bar and menu */
.top { display: grid; grid-template-columns: 30px 1fr; grid-template-rows: 17px 16px; background: #4e4e4e; flex: none; }
.app-button {
  grid-row: 1 / 3;
  height: 30px;
  background: linear-gradient(#5a5a5a, #aaa);
  border: 1px solid #222;
}
.titlebar { display: flex; min-width: 0; background: linear-gradient(110deg, #b6cfea 0 30%, #d2e2f4 40% 50%, #b6cfea 60%, #c9dcf1); }
.quick { width: 192px; display: flex; align-items: center; gap: 4px; padding-left: 5px; background: linear-gradient(#686868, #969696); }
.caption { flex: 1; display: flex; gap: 12px; justify-content: center; align-items: center; color: #1c2430; white-space: pre; background: linear-gradient(60deg, #b2cae6 20%, #d6e5f6 22% 58%, #b6cde8 75%, #aac4e2 90%); }
.info { display: flex; width: 327px; align-items: center; background: linear-gradient(#606060, #8c8c8c); gap: 5px; padding-right: 3px; }
.info-arrow { background: #777; width: 10px; height: 17px; margin-right: -5px; }
.search { width: 132px; height: 15px; background: #717171; border: 1px solid #555; padding: 0 2px; font-style: italic; }
.search::placeholder { color: #c4c4c4; }
.login { gap: 4px; }
.push { margin-left: auto; }
.help { width: 12px; height: 12px; border-radius: 50%; border: 1px solid #fff; background: #2d568f; color: #fff; font-weight: bold; }
.window-controls { width: 90px; display: flex; justify-content: flex-end; padding: 0 2px 4px 0; }
.window-controls button { width: 25px; border: 1px solid #62758f; border-top: 0; background: linear-gradient(#d4deeb, #91a8c3); border-radius: 0 0 0 4px; }
.window-controls button + button { width: 16px; border-radius: 0; }
.window-controls .close { width: 36px; background: linear-gradient(#dc9a8d, #c23c28 50%, #d16952); border-radius: 0 0 4px 0; }
.menu { display: flex; padding-left: 5px; align-items: stretch; }
.menu a { padding: 2px 7px 0; white-space: nowrap; }
.menu a.active { background: #666; padding: 2px 5px 0; border: 1px solid #777; border-width: 1px 1px 0; line-height: 11px; }
.menu-toggle { margin-left: 17px; }

/* ribbon */
.ribbon { display: flex; flex: none; padding-left: 2px; background: #484848; border-bottom: 1px solid #686868; }
.panel { display: flex; flex-direction: column; flex: none; background: #5f5f5f; border-right: 1px solid #464646; }
.draw { width: 153px; }
.modify { width: 142px; }
.annotate { width: 92px; }
.layers { width: 184px; }
.block { width: 59px; }
.props { width: 147px; }
.group { width: 50px; }
.utils { width: 56px; }
.clip { width: 55px; }
.view { width: 45px; }
.tools { display: flex; padding: 3px 1px 1px; height: 58px; background: linear-gradient(#575757, #626262 20%); }
.big { flex-direction: column; justify-content: flex-start; align-items: center; width: 30px; padding-top: 1px; line-height: 14px; }
.big svg { margin-bottom: 2px; }
.big .caret { margin-top: 2px; }
.big.wrap { white-space: normal; line-height: 12px; padding: 1px 4px 0; }
.draw .big { width: 29px; }
.stack { display: grid; grid-template-rows: repeat(3, 18px); flex: 1; }
.stack button, .stack span { justify-content: flex-start; display: flex; align-items: center; gap: 4px; padding-left: 2px; }
.stack .selected { background: #5b86bd; border: 1px solid #86a9d3; width: 18px; padding: 0 1px; }
.draw .stack { padding-left: 5px; }
.modify .tools, .annotate .tools { padding-left: 3px; }
.modify .stack { flex: none; width: 43px; }
.modify .stack:nth-child(3) { width: 30px; padding-left: 1px; }
.modify .stack:nth-child(4) { width: 18px; }
.modify .stack:nth-child(-n+2) button { gap: 3px; }
.panel-title { width: 100%; height: 14px; display: flex; align-items: center; justify-content: center; gap: 5px; background: #535353; white-space: nowrap; }
.utils .panel-title, .view .panel-title { gap: 4px; }
.title-row { display: flex; background: #535353; }
.launcher { width: 9px; }
.combo { display: flex; align-items: center; height: 16px; padding-right: 3px; background: linear-gradient(#4b4b4b, #6a6a6a); border: 1px solid #3d3d3d; }
.combo select { appearance: none; flex: 1; min-width: 0; padding-left: 4px; height: 14px; }
.combo option { color: #222; }
.layer-side { flex: 1; }
.layer-side .combo { margin: 1px 0; }
.icon-row { display: flex; height: 18px; align-items: center; gap: 4px; padding-left: 2px; }
.marks { flex: none; width: 15px; }
.marks span { padding: 0; }
.prop-combos { flex: 1; display: grid; grid-template-rows: repeat(3, 18px); align-items: center; }
.prop-combos .combo { padding-right: 2px; }
.prop-combos .combo select { padding-left: 2px; }
.clip .stack, .utils .stack { padding-left: 4px; }
.view .big { width: 42px; }
.utils .big, .clip .big { width: 34px; }

/* document tabs */
.doc-tabs { display: flex; flex: none; height: 20px; padding: 1px 0 0 12px; border-bottom: 2px solid #686868; }
.doc { display: flex; align-items: center; justify-content: space-between; }
.start { width: 96px; padding-left: 11px; color: #b8b8b8; background: linear-gradient(#666, #505050); clip-path: polygon(0 100%, 3% 80%, 6% 20%, 9% 0, 94% 0, 100% 20%, 100% 100%); }
.current { width: 90px; padding: 0 9px 0 6px; color: #fff; background: linear-gradient(#8a8a8a, #696969); clip-path: polygon(0 0, 90% 0, 95% 20%, 100% 100%, 0 100%); border-radius: 5px 0 0; }
.doc-add { width: 18px; margin: 2px 0 2px 4px; border-radius: 3px 7px 7px 7px; background: #565656; font-size: 14px; }

/* drawing area */
.canvas { flex: 1; position: relative; min-height: 0; overflow: hidden; background: #000; }
.drawing { position: absolute; inset: 0; }
.grid-minor { stroke: #16161c; fill: none; }
.grid-major { stroke: #242430; fill: none; }
.entity, .cursor { stroke: #d8d8d8; fill: none; }
.viewport-label { position: absolute; left: 3px; top: 5px; color: #ddd; }
.dynamic { position: absolute; left: 661px; top: 70px; display: flex; gap: 2px; line-height: 13px; }
.dynamic label { background: #c8edcd; border: 1px solid #8a9150; padding: 0 6px 0 1px; display: flex; align-items: center; }
.dynamic input { width: 40px; height: 13px; background: #3797f5; color: #fff; }
.dynamic output { background: #161650; border: 1px solid #98955d; color: #cbc9a1; padding: 0 7px 0 4px; }
.viewport-controls { position: absolute; right: 14px; top: 7px; display: flex; gap: 7px; }
.cube { position: absolute; right: 15px; top: 27px; width: 72px; height: 72px; display: grid; grid-template-columns: 1fr 28px 1fr; grid-template-rows: 1fr 28px 1fr; justify-items: center; align-items: center; color: #aaa; font-size: 10px; }
.cube::before { content: ""; position: absolute; left: 4px; top: 4px; width: 64px; height: 64px; border: 7px solid #303030; border-radius: 50%; }
.cube span { position: relative; }
.n { grid-area: 1 / 2; align-self: start; }
.w { grid-area: 2 / 1; justify-self: start; }
.e { grid-area: 2 / 3; justify-self: end; }
.s { grid-area: 3 / 2; align-self: end; }
.ring-top { grid-area: 2 / 2; width: 28px; height: 28px; border: 5px solid #999; background: #858585; color: #343434; font-size: 16px; }
.wcs { position: absolute; right: 35px; top: 111px; height: 12px; width: 35px; gap: 7px; border: 1px solid #858594; border-radius: 3px; background: #6e6e7b; color: #444452; }
.wcs .caret { background: #789; }
.navbar { position: absolute; right: 8px; top: 142px; width: 24px; height: 156px; padding: 1px 2px; display: flex; flex-direction: column; align-items: center; justify-content: space-between; border-radius: 3px; background: #444; }
.navbar .corner { align-self: flex-end; }
.navbar .caret { background: #222; }
.history { position: absolute; left: 42px; bottom: 18px; font: 9px/12px "DejaVu Sans Mono", "Noto Sans CJK SC", monospace; display: flex; flex-direction: column; align-items: flex-start; }
.history p { background: #4b4b4b; color: #e2e2e2; padding: 0 1px; line-height: 11px; margin-bottom: 1px; white-space: pre; }
.history .old { color: #aaa; }
.command { position: absolute; left: 0; bottom: 0; width: 705px; height: 19px; display: flex; align-items: center; color: #1c2a22; background: #c7ebcd; border: 1px solid #a8b8a8; border-left: 0; font: 9px/14px "DejaVu Sans Mono", "Noto Sans CJK SC", monospace; }
.command-tools { flex: none; display: flex; align-items: center; align-self: stretch; gap: 6px; width: 40px; padding-left: 2px; background: linear-gradient(90deg, #555, #777); margin-right: 4px; }
.command b { margin-right: 4px; }
.prompt { display: flex; white-space: pre; }
.prompt button { background: #d5cad3; }
.prompt em { color: #3838e0; font-style: normal; font-weight: bold; }
.command-up { margin-left: auto; margin-right: 2px; }
.window-edge { position: absolute; right: 0; top: 0; bottom: 0; width: 6px; background: #b9cee9; border-right: 1px solid #3cb6d5; }
.ball { position: absolute; right: -16px; top: 291px; width: 30px; height: 30px; border-radius: 50%; border: 2px solid #ddd; background: radial-gradient(circle at 50% 20%, #8dea9d, #32b850); color: #fff; font-weight: bold; line-height: 27px; padding-left: 2px; }

/* status bar */
.status { flex: none; height: 23px; display: flex; align-items: flex-start; background: #393939; border-top: 1px solid #555; }
.layouts { display: flex; padding-left: 8px; width: 594px; }
.layouts a { width: 39px; height: 14px; line-height: 14px; text-align: center; background: #595959; color: #c5c5c5; clip-path: polygon(0 0, 100% 0, 86% 100%, 14% 100%); }
.layouts a.on { width: 36px; background: #7b7b7b; color: #fff; font-weight: bold; }
.layouts button { width: 17px; height: 12px; margin-left: 1px; border-radius: 2px 7px 7px; background: #585858; font-size: 13px; }
.toggles { flex: 1; min-width: 0; display: flex; align-items: center; gap: 3px; background: #505050; border: 1px solid #777; height: 21px; padding-left: 2px; }
.toggles button { gap: 4px; height: 18px; }
.toggles .model { font-weight: bold; }
.toggles .lit { background: #5888c2; padding: 0 2px; }

/* brand overlay */
.brand { position: absolute; right: 0; bottom: 0; width: 200px; height: 95px; padding: 19px 10px 0 12px; display: flex; gap: 7px; background: #223055; color: #d5d5d5; font-family: Inter, "Noto Sans CJK SC", sans-serif; }
.brand div { display: flex; flex-direction: column; }
.brand strong { font-size: 28px; line-height: 36px; font-weight: 500; white-space: nowrap; }
.brand span { font-size: 24px; line-height: 28px; font-weight: 300; white-space: nowrap; }
```

FILE: grid.js
```js
// Fills the drawing area with grid lines; every fifth line is a major one.
const STEP = 7.635;
const lines = { minor: "", major: "" };
for (let i = 0; i < 400; i++) {
  const kind = i % 5 === 1 ? "major" : "minor";
  const x = Math.floor(24.8 + (i - 5) * STEP) + 0.5;
  lines[kind] += `M${x} 0V2000`;
}
for (let i = 0; i < 200; i++) {
  const kind = i % 5 === 4 ? "major" : "minor";
  const y = Math.floor(0.8 + i * STEP) + 0.5;
  lines[kind] += `M0 ${y}H3000`;
}
document.getElementById("minor").setAttribute("d", lines.minor);
document.getElementById("major").setAttribute("d", lines.major);
```
